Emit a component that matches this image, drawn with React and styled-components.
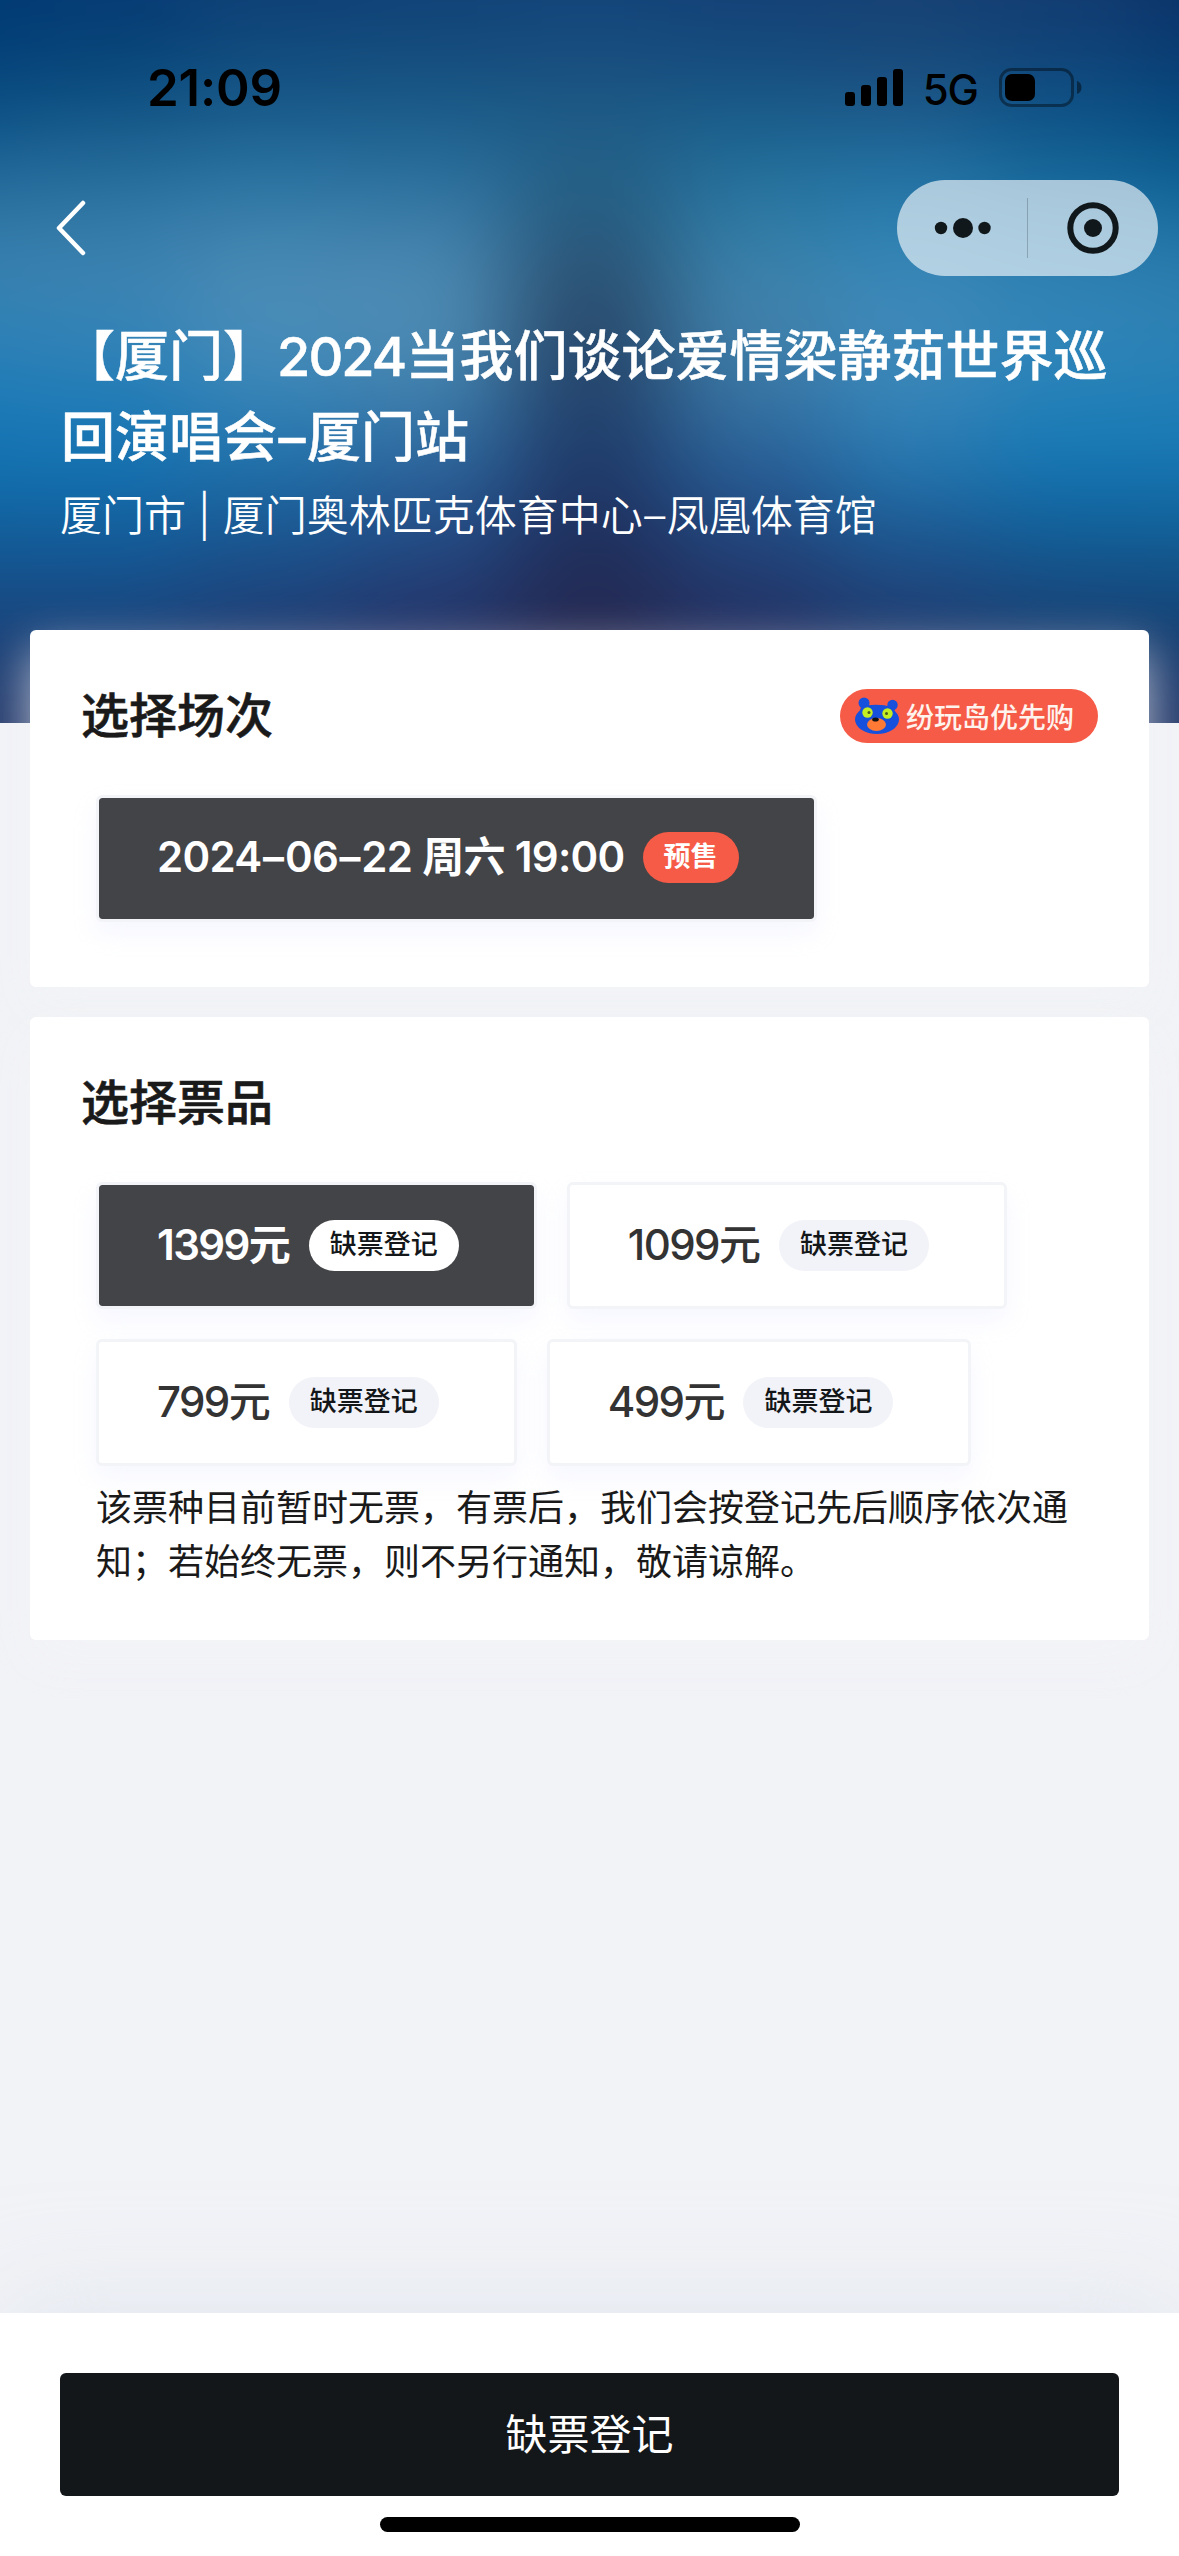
import React from 'react';
import styled, { createGlobalStyle } from 'styled-components';

// --- GLOBAL STYLES ---
const GlobalStyle = createGlobalStyle`
    body {
        margin: 0;
        font-family: Inter, 'Noto Sans CJK SC', sans-serif;
        background-color: #f2f3f7;
        color: #1a1a1a;
    }
`;

// --- Data ---
const backdropColumns = [
    ['#003873', '#02437a', '#1a6394', '#3a7fac', '#3383b5', '#1a7ab8', '#1070b0', '#12548f', '#1a4178', '#2a3c6c'],
    ['#053a73', '#074778', '#206998', '#3d80ad', '#3a86b7', '#1f7cb8', '#1171b1', '#135490', '#1b4078', '#2a3c6c'],
    ['#0e3f75', '#124f80', '#226e9c', '#4587b3', '#5090ba', '#3484b8', '#1a6ca8', '#1a4c86', '#20396f', '#2a3766'],
    ['#104076', '#16527f', '#226a99', '#4583ad', '#5390b7', '#3c7eac', '#28609a', '#20417a', '#253266', '#2b2d58'],
    ['#124278', '#1a5382', '#23648a', '#2a587c', '#2b4a6a', '#22436c', '#1e386a', '#1f2b56', '#272850', '#2b2a52'],
    ['#143f76', '#15507f', '#1f6c98', '#3580a9', '#4584ad', '#3773a2', '#235a94', '#203b70', '#253062', '#2b2d58'],
    ['#164074', '#194c7c', '#1f6f9f', '#2f84b6', '#448bba', '#3786ba', '#2073ad', '#1b4a83', '#203b6e', '#2a3766'],
    ['#123a70', '#0f487c', '#0d6093', '#2a7db0', '#3786b7', '#2282ba', '#1073b2', '#135389', '#193c6e', '#2a3c6c'],
    ['#0a2f66', '#063f74', '#04568a', '#2478a8', '#3282b2', '#1f7fb8', '#1474b2', '#105588', '#153c70', '#2a3c6c'],
];

const tickets = [
    { price: '1399', selected: true },
    { price: '1099' },
    { price: '799' },
    { price: '499' },
];

// --- Page ---
const Page = styled.div`
    display: flex;
    flex-direction: column;
    width: 1179px;
    height: 2556px;
    overflow: hidden;
`;

// --- Hero ---
const Hero = styled.header`
    position: relative;
    box-sizing: border-box;
    height: 723px;
    flex-shrink: 0;
    overflow: hidden;
    color: white;
`;
const Backdrop = styled.div`
    position: absolute;
    inset: -130px;
    display: flex;
    filter: blur(48px);
`;
const BackdropColumn = styled.div`
    flex: 1;
    background: linear-gradient(${({ $stops }) => $stops.map((c, i) => `${c} ${130 + i * 80}px`).join(', ')});
`;
const HeroContent = styled.div`
    position: relative;
    display: flex;
    flex-direction: column;
`;
const StatusBar = styled.div`
    display: flex;
    align-items: center;
    justify-content: space-between;
    height: 175px;
    padding: 0 97px 0 147px;
    box-sizing: border-box;
    color: black;
`;
const Clock = styled.span`
    font-size: 51px;
    font-weight: 600;
    letter-spacing: -0.2px;
`;
const StatusIcons = styled.div`
    display: flex;
    align-items: center;
`;
const Network = styled.span`
    font-size: 42px;
    font-weight: 500;
    letter-spacing: -1px;
    margin: 4px 21px 0 20px;
`;
const NavBar = styled.div`
    display: flex;
    align-items: center;
    justify-content: space-between;
    height: 106px;
    padding: 0 21px 0 54px;
`;
const Capsule = styled.div`
    display: flex;
    align-items: center;
    width: 261px;
    height: 96px;
    border-radius: 48px;
    background-color: rgba(255, 255, 255, 0.62);
`;
const CapsuleHalf = styled.div`
    flex: 1;
    display: flex;
    justify-content: center;
`;
const CapsuleDivider = styled.div`
    width: 1px;
    height: 60px;
    background-color: rgba(0, 0, 0, 0.2);
`;
const EventTitle = styled.h1`
    margin: 35px 60px 0 61px;
    font-size: 54px;
    line-height: 81px;
    font-weight: 500;
    -webkit-text-stroke: 0.5px currentColor;
`;
const TitleDigits = styled.span`
    letter-spacing: -1.9px;
`;
const Dash = styled.span`
    margin: 0 1.5px;
`;
const Venue = styled.p`
    margin: 8px 60px 0;
    font-size: 42px;
    line-height: 60px;
    font-weight: 350;
`;

// --- Cards ---
const Cards = styled.main`
    position: relative;
    display: flex;
    flex-direction: column;
    gap: 30px;
    margin: -93px 30px 0;
`;
const Card = styled.section`
    box-sizing: border-box;
    height: ${({ $height }) => $height}px;
    padding: 50px 51px 0;
    border-radius: 6px;
    background-color: white;
    box-shadow: 0 20px 48px rgba(242, 243, 247, 0.7);
`;
const CardHeader = styled.div`
    display: flex;
    align-items: center;
    justify-content: space-between;
    height: 72px;
`;
const CardTitle = styled.h2`
    margin: 0;
    font-size: 48px;
    line-height: 72px;
    font-weight: 500;
    -webkit-text-stroke: 0.6px currentColor;
`;
const PriorityBadge = styled.div`
    display: flex;
    align-items: center;
    width: 258px;
    height: 54px;
    padding-left: 15px;
    box-sizing: border-box;
    border-radius: 27px;
    background-color: #f55b46;
    color: #fff3ee;
    font-size: 28px;
    font-weight: 500;
    gap: 7px;
`;
const Options = styled.div`
    display: flex;
    flex-wrap: wrap;
    gap: 30px;
    margin: 43px 0 0 15px;
`;
const Option = styled.div`
    display: flex;
    align-items: center;
    box-sizing: border-box;
    height: 127px;
    padding: 0 75px ${({ $lift }) => $lift || 0}px 58px;
    border: 3px solid #f3f4f7;
    border-radius: 6px;
    background-color: ${({ $selected }) => ($selected ? '#434447' : 'white')};
    background-clip: padding-box;
    box-shadow: 0 12px 24px rgba(235, 238, 255, 0.45);
    color: ${({ $selected }) => ($selected ? 'white' : '#333333')};
    font-size: 42px;
    line-height: 54px;
    font-weight: ${({ $selected }) => ($selected ? 600 : 500)};
    white-space: pre;
`;
const Label = styled.span`
    padding-bottom: 1px;
`;
const Digits = styled.span`
    letter-spacing: ${({ $spacing }) => $spacing ?? -1.6}px;
`;
const Tag = styled.span`
    height: 51px;
    margin-left: 18px;
    padding: 0 21px;
    border-radius: 26px;
    background-color: ${({ $tone }) => ({ sale: '#f55b46', light: 'white' }[$tone] || '#f2f3f8')};
    color: ${({ $tone }) => ($tone === 'sale' ? 'white' : '#141719')};
    font-size: 27px;
    line-height: 49px;
    font-weight: ${({ $tone }) => ($tone === 'sale' ? 700 : 500)};
`;
const Notice = styled.p`
    width: 985px;
    margin: 15px 0 0 15px;
    font-size: 36px;
    line-height: 54px;
    font-weight: 400;
`;

// --- Bottom bar ---
const BottomBar = styled.footer`
    display: flex;
    flex-direction: column;
    align-items: center;
    box-sizing: border-box;
    height: 243px;
    margin-top: auto;
    padding: 60px 60px 0;
    background-color: white;
    box-shadow: 0 -12px 100px rgba(214, 224, 234, 0.5);
`;
const RegisterButton = styled.button`
    width: 1059px;
    height: 123px;
    padding: 0 0 7px;
    border: none;
    border-radius: 6px;
    background-color: #141719;
    color: white;
    font-family: inherit;
    font-size: 42px;
    font-weight: 400;
`;
const HomeIndicator = styled.div`
    width: 420px;
    height: 15px;
    margin-top: 21px;
    border-radius: 8px;
    background-color: black;
`;

// --- Icons ---
const SignalIcon = () => (
    <svg width="58" height="38" viewBox="0 0 58 38">
        <rect x="0" y="23" width="10" height="14" rx="3" />
        <rect x="16" y="16" width="10" height="21" rx="3" />
        <rect x="32" y="8" width="10" height="29" rx="3" />
        <rect x="48" y="0" width="10" height="37" rx="3" />
    </svg>
);

const BatteryIcon = () => (
    <svg width="83" height="39" viewBox="0 0 83 39">
        <rect x="1.5" y="1.5" width="72" height="36" rx="11" fill="none" stroke="#000" strokeOpacity="0.4" strokeWidth="3" />
        <rect x="6" y="6" width="30" height="27" rx="7" />
        <path d="M78 13c3 1 4.500 3.500 4.500 6.500s-1.500 5.500-4.500 6.500z" fillOpacity="0.45" />
    </svg>
);

const BackIcon = () => (
    <svg width="34" height="56" viewBox="0 0 34 56" fill="none" stroke="#fff" strokeWidth="4.500" strokeLinecap="round" strokeLinejoin="round">
        <path d="M29 3L5 28l24 25" />
    </svg>
);

const MoreIcon = () => (
    <svg width="58" height="24" viewBox="0 0 58 24" fill="#11181b">
        <circle cx="8" cy="12" r="6.200" />
        <circle cx="30" cy="12" r="10" />
        <circle cx="51.500" cy="12" r="6.200" />
    </svg>
);

const CloseIcon = () => (
    <svg width="52" height="52" viewBox="0 0 52 52">
        <circle cx="26" cy="26" r="22.700" fill="none" stroke="#11181b" strokeWidth="6" />
        <circle cx="26" cy="26" r="9" fill="#11181b" />
    </svg>
);

const BearIcon = () => (
    <svg width="44" height="38" viewBox="0 0 44 38">
        <g fill="#1750dc">
            <circle cx="9" cy="6" r="5.500" />
            <circle cx="37.500" cy="8" r="5.200" />
            <path d="M6 10c9-3 23-3 33 1l2 10H3z" />
            <ellipse cx="22" cy="22.500" rx="22" ry="14.500" />
        </g>
        <circle cx="12.500" cy="15.500" r="5.200" fill="#c4ee22" />
        <circle cx="32.500" cy="16.500" r="5.200" fill="#c4ee22" />
        <circle cx="14" cy="15.500" r="1.500" fill="#4c5b1c" />
        <circle cx="31.500" cy="16.500" r="1.500" fill="#4c5b1c" />
        <ellipse cx="21.500" cy="27.500" rx="9.500" ry="6.500" fill="#ff7a35" />
        <ellipse cx="20.500" cy="22.500" rx="3.300" ry="2" fill="#111" />
    </svg>
);

const App = () => (
    <Page>
        <GlobalStyle />
        {/* --- HERO --- */}
        <Hero>
            <Backdrop>
                {backdropColumns.map((stops, i) => <BackdropColumn key={i} $stops={stops} />)}
            </Backdrop>
            <HeroContent>
                <StatusBar>
                    <Clock>21:09</Clock>
                    <StatusIcons>
                        <SignalIcon />
                        <Network>5G</Network>
                        <BatteryIcon />
                    </StatusIcons>
                </StatusBar>
                <NavBar>
                    <BackIcon />
                    <Capsule>
                        <CapsuleHalf><MoreIcon /></CapsuleHalf>
                        <CapsuleDivider />
                        <CapsuleHalf><CloseIcon /></CapsuleHalf>
                    </Capsule>
                </NavBar>
                <EventTitle>
                    【厦门】<TitleDigits>2024</TitleDigits>当我们谈论爱情梁静茹世界巡<br />
                    回演唱会<Dash>–</Dash>厦门站
                </EventTitle>
                <Venue>厦门市 | 厦门奥林匹克体育中心<Dash>–</Dash>凤凰体育馆</Venue>
            </HeroContent>
        </Hero>

        <Cards>
            {/* --- SESSION --- */}
            <Card $height={357}>
                <CardHeader>
                    <CardTitle>选择场次</CardTitle>
                    <PriorityBadge>
                        <BearIcon />
                        纷玩岛优先购
                    </PriorityBadge>
                </CardHeader>
                <Options>
                    <Option $selected $lift={3}>
                        <Digits $spacing={-0.7}>
                            2024<Dash>–</Dash>06<Dash>–</Dash>22 周六 19:00
                        </Digits>
                        <Tag $tone="sale">预售</Tag>
                    </Option>
                </Options>
            </Card>

            {/* --- TICKETS --- */}
            <Card $height={623}>
                <CardHeader>
                    <CardTitle>选择票品</CardTitle>
                </CardHeader>
                <Options>
                    {tickets.map(({ price, selected }) => (
                        <Option key={price} $selected={selected}>
                            <Label><Digits>{price}</Digits>元</Label>
                            <Tag $tone={selected ? 'light' : 'muted'}>缺票登记</Tag>
                        </Option>
                    ))}
                </Options>
                <Notice>
                    该票种目前暂时无票，有票后，我们会按登记先后顺序依次通知；若始终无票，则不另行通知，敬请谅解。
                </Notice>
            </Card>
        </Cards>

        {/* --- BOTTOM BAR --- */}
        <BottomBar>
            <RegisterButton>缺票登记</RegisterButton>
            <HomeIndicator />
        </BottomBar>
    </Page>
);

export default App;
